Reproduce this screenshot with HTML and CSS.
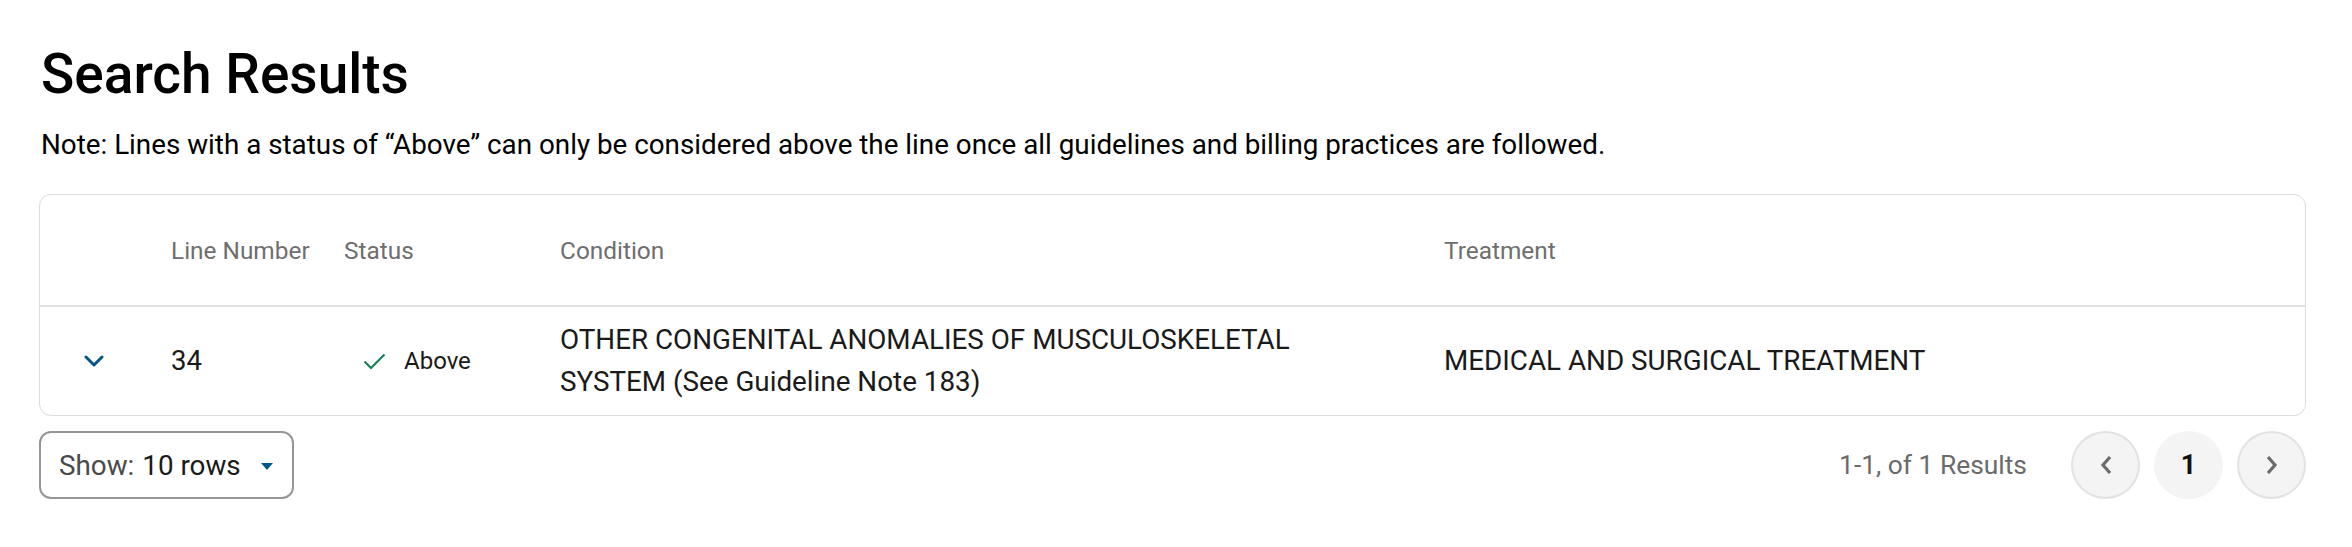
FILE: index.html
```html
<!DOCTYPE html>
<html lang="en">
<head>
<meta charset="utf-8">
<title>Search Results</title>
<link rel="stylesheet" href="styles.css">
</head>
<body>
<main class="page">
  <h1 class="title">Search Results</h1>
  <p class="note">Note: Lines with a status of “Above” can only be considered above the line once all guidelines and billing practices are followed.</p>

  <div class="table">
    <div class="row head">
      <div class="cell"></div>
      <div class="cell">Line Number</div>
      <div class="cell">Status</div>
      <div class="cell">Condition</div>
      <div class="cell">Treatment</div>
    </div>
    <div class="row body">
      <div class="cell expand">
        <svg class="chev" width="20" height="12" viewBox="0 0 20 12"><path d="M2 2 L10 10 L18 2" fill="none" stroke="#00568a" stroke-width="3" stroke-linecap="round" stroke-linejoin="round"/></svg>
      </div>
      <div class="cell num">34</div>
      <div class="cell status">
        <svg class="check" width="23" height="17" viewBox="0 0 23 17"><path d="M1.5 8.5 L8 15 L21.5 1.5" fill="none" stroke="#1d7f57" stroke-width="2.2"/></svg>
        <span>Above</span>
      </div>
      <div class="cell text">OTHER CONGENITAL ANOMALIES OF MUSCULOSKELETAL SYSTEM (See Guideline Note 183)</div>
      <div class="cell text">MEDICAL AND SURGICAL TREATMENT</div>
    </div>
  </div>

  <div class="footer">
    <div class="select">
      <span class="sel-label">Show:</span>
      <span class="sel-value">10 rows</span>
      <svg class="caret" width="12" height="7" viewBox="0 0 12 7"><path d="M0 0 L12 0 L6 7 Z" fill="#00568a"/></svg>
    </div>
    <div class="pager">
      <span class="count">1-1, of 1 Results</span>
      <button class="pbtn nav" aria-label="Previous">
        <svg width="14" height="22" viewBox="0 0 14 22"><path d="M11 3 L4 11 L11 19" fill="none" stroke="#6b6b6b" stroke-width="3.2" stroke-linejoin="miter"/></svg>
      </button>
      <button class="pbtn current">1</button>
      <button class="pbtn nav" aria-label="Next">
        <svg width="14" height="22" viewBox="0 0 14 22"><path d="M3 3 L10 11 L3 19" fill="none" stroke="#6b6b6b" stroke-width="3.2" stroke-linejoin="miter"/></svg>
      </button>
    </div>
  </div>
</main>
</body>
</html>
```

FILE: styles.css
```css
html, body {
  margin: 0;
  padding: 0;
  background: #ffffff;
}

body {
  font-family: Roboto, "Liberation Sans", Arial, sans-serif;
  color: #1a1a1a;
}

.page {
  padding: 41px 46px 0 39px;
}

.title {
  margin: 0;
  font-size: 55px;
  line-height: 66px;
  font-weight: 500;
  color: #000;
  padding-left: 2px;
}

.note {
  margin: 19px 0 0 0;
  font-size: 27.8px;
  line-height: 38px;
  color: #000;
  padding-left: 2px;
}

.table {
  margin-top: 30px;
  border: 1px solid #dcdcdc;
  border-radius: 12px;
}

.row {
  display: grid;
  grid-template-columns: 131px 173px 216px 884px 1fr;
  align-items: center;
}

.row.head {
  height: 110px;
  border-bottom: 2px solid #e2e2e2;
  font-size: 24.4px;
  color: #6e6e6e;
}

.row.body {
  height: 108px;
  font-size: 27.8px;
  line-height: 42px;
  color: #1a1a1a;
}

.expand {
  padding-left: 44px;
  display: flex;
  align-items: center;
}

.num {
  font-size: 27.5px;
}

.status {
  display: flex;
  align-items: center;
  gap: 18px;
  padding-left: 19px;
  font-size: 24px;
}

.check {
  display: block;
}

.text {
  padding-right: 90px;
}

.footer {
  display: flex;
  justify-content: space-between;
  align-items: center;
  margin-top: 15px;
}

.select {
  box-sizing: border-box;
  width: 255px;
  height: 68px;
  border: 2px solid #969696;
  border-radius: 12px;
  display: flex;
  align-items: center;
  padding-left: 18px;
  font-size: 27.8px;
}

.sel-label {
  color: #4a4a4a;
  margin-right: 8px;
}

.sel-value {
  color: #1a1a1a;
}

.caret {
  margin-left: 20px;
  margin-top: 2px;
}

.pager {
  display: flex;
  align-items: center;
  gap: 14px;
}

.count {
  font-size: 26.4px;
  color: #6b6b6b;
  margin-right: 30px;
}

.pbtn {
  box-sizing: border-box;
  width: 69px;
  height: 68px;
  border-radius: 50%;
  background: #f4f4f4;
  border: 2px solid #e2e2e2;
  display: flex;
  align-items: center;
  justify-content: center;
  padding: 0;
  font-family: Roboto, "Liberation Sans", Arial, sans-serif;
}

.pbtn.current {
  border-color: #f4f4f4;
  font-size: 27px;
  font-weight: 700;
  color: #111;
}
```
